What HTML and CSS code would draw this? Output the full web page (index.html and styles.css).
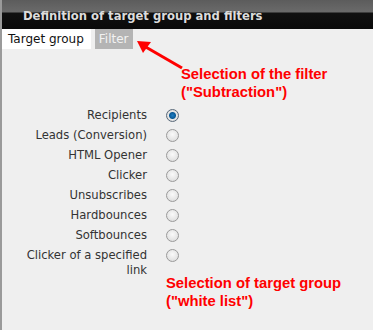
FILE: index.html
```html
<!DOCTYPE html>
<html lang="en">

<head>
  <meta charset="UTF-8" />
  <title>Definition of target group and filters</title>
  <link rel="stylesheet" href="styles.css">
</head>

<body>

  <div class="panel">
    <div class="panel-header">Definition of target group and filters</div>

    <div class="tabs">
      <span class="tab active">Target group</span>
      <span class="tab">Filter</span>
    </div>

    <div class="options">
      <label class="option"><span class="option-label">Recipients</span><span class="radio checked"></span></label>
      <label class="option"><span class="option-label">Leads (Conversion)</span><span class="radio"></span></label>
      <label class="option"><span class="option-label">HTML Opener</span><span class="radio"></span></label>
      <label class="option"><span class="option-label">Clicker</span><span class="radio"></span></label>
      <label class="option"><span class="option-label">Unsubscribes</span><span class="radio"></span></label>
      <label class="option"><span class="option-label">Hardbounces</span><span class="radio"></span></label>
      <label class="option"><span class="option-label">Softbounces</span><span class="radio"></span></label>
      <label class="option"><span class="option-label">Clicker of a specified link</span><span class="radio"></span></label>
    </div>

    <div class="note note-filter">Selection of the filter<br />("Subtraction")</div>
    <div class="note note-group">Selection of target group<br />("white list")</div>

    <svg class="arrow" width="60" height="40" viewBox="0 0 60 40">
      <line x1="50" y1="31" x2="12" y2="9" stroke="#ff0000" stroke-width="3" />
      <polygon points="5,4 19,5 11,16" fill="#ff0000" />
    </svg>
  </div>

</body>

</html>
```

FILE: styles.css
```css
body {
  margin: 0;
  padding: 0;
  background: #efefef;
  font-family: 'DejaVu Sans', Verdana, sans-serif;
}

.panel {
  position: relative;
  height: 330px;
  background: #efefef;
  border-left: 2px solid #9a9a9a;
  box-sizing: border-box;
  overflow: hidden;
}

.panel-header {
  height: 29px;
  margin-left: -2px;
  padding-left: 23px;
  background: linear-gradient(#5c5c5c 0, #6a6a6a 12px, #101010 13px, #0a0a0a 29px);
  color: #dcdcdc;
  font-size: 11.6px;
  font-weight: bold;
  line-height: 32px;
  white-space: nowrap;
}

.tabs {
  display: flex;
  gap: 4px;
  margin-left: -2px;
  height: 20px;
}

.tab {
  padding: 0 4px;
  font-size: 12px;
  line-height: 20px;
  background: #b4b4b4;
  color: #f2f2f2;
}

.tab.active {
  padding: 0 7px 0 8px;
  background: #fff;
  color: #111;
}

.options {
  display: flex;
  flex-direction: column;
  padding-top: 59px;
}

.option {
  display: flex;
  align-items: flex-start;
  gap: 19px;
  min-height: 20px;
}

.option-label {
  width: 122px;
  margin-left: 23px;
  text-align: right;
  font-size: 11.6px;
  line-height: 15px;
  color: #333;
}

.radio {
  width: 11px;
  height: 11px;
  margin-top: 1px;
  border-radius: 50%;
  border: 1px solid #9a9a9a;
  background: radial-gradient(circle at 50% 40%, #fafafa, #d8d8d8);
}

.radio.checked {
  background: radial-gradient(circle at 50% 50%, #1d7dc4 0, #0b5a96 3px, #e8e8e8 4px, #d8d8d8 6px);
  border-color: #5a6a7a;
}

.note {
  position: absolute;
  color: #ff0000;
  font-family: 'Liberation Sans', Arial, sans-serif;
  font-size: 14.8px;
  font-weight: bold;
  line-height: 18px;
}

.note-filter {
  left: 179px;
  top: 65px;
}

.note-group {
  left: 164px;
  top: 274px;
}

.arrow {
  position: absolute;
  left: 130px;
  top: 37px;
}
```
